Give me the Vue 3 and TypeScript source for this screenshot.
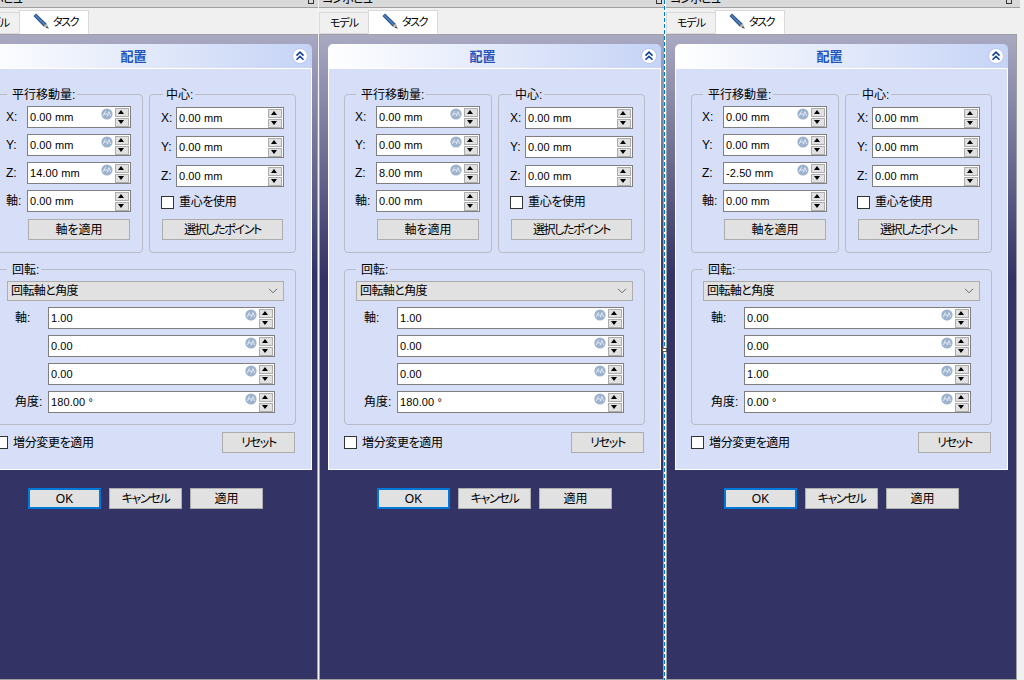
<script setup lang="ts">
interface Column {
  key: string
  z: string
  axis: string[]
  angle: string
}

const columns: Column[] = [
  { key: 'one', z: '14.00 mm', axis: ['1.00', '0.00', '0.00'], angle: '180.00 °' },
  { key: 'two', z: '8.00 mm', axis: ['1.00', '0.00', '0.00'], angle: '180.00 °' },
  { key: 'three', z: '-2.50 mm', axis: ['0.00', '0.00', '1.00'], angle: '0.00 °' },
]

const moveRows = (c: Column) => [
  { label: 'X:', value: '0.00 mm', wheel: true },
  { label: 'Y:', value: '0.00 mm', wheel: true },
  { label: 'Z:', value: c.z, wheel: true },
  { label: '軸:', value: '0.00 mm', wheel: false },
]
const centerRows = ['X:', 'Y:', 'Z:']
const rotateRows = (c: Column) => [
  { label: '軸:', value: c.axis[0] },
  { label: '', value: c.axis[1] },
  { label: '', value: c.axis[2] },
  { label: '角度:', value: c.angle },
]
</script>

<template>
  <div class="screen">
    <template v-for="(c, i) in columns" :key="c.key">
      <section class="col" :class="c.key">
        <div class="titlebar">
          <span class="titletext">コンボビュー</span>
          <i class="float"></i>
        </div>
        <div class="tabs">
          <div class="tab model">モデル</div>
          <div class="tab active">
            <svg class="pencil" width="16" height="16" viewBox="0 0 16 16">
              <path d="M3 .4 L.4 3 L10.4 13.2 L15.6 15.6 L13.4 10.4 Z" fill="#2b5288" />
              <path d="M2.4 1.4 L12.4 11 L11.2 12.2 L1.4 2.6 Z" fill="#5284bf" />
              <path d="M10.4 13.2 L15.6 15.6 L13.4 10.4 Z" fill="#bdb8a8" />
              <path d="M13.6 13.4 L15.6 15.6 L13 14.8 Z" fill="#222" />
            </svg>
            <span>タスク</span>
          </div>
        </div>
        <div class="stage">
          <div class="panel">
            <header class="phead">
              <h2>配置</h2>
              <button class="collapse" type="button" aria-label="collapse">
                <svg width="10" height="10" viewBox="0 0 10 10" fill="none" stroke="#123f9c" stroke-width="1.6">
                  <path d="M1.5 4.6 L5 1.2 L8.5 4.6" />
                  <path d="M1.5 8.8 L5 5.4 L8.5 8.8" />
                </svg>
              </button>
            </header>
            <div class="pbody">
              <div class="toprow">
                <fieldset class="group move">
                  <legend>平行移動量:</legend>
                  <div class="rows">
                    <template v-for="r in moveRows(c)" :key="r.label">
                      <label>{{ r.label }}</label>
                      <div class="spin">
                        <span class="val">{{ r.value }}</span>
                        <svg v-if="r.wheel" class="wheel" viewBox="0 0 12 12">
                          <circle cx="6" cy="6" r="5.6" fill="#9db2cd" />
                          <path d="M2.4 8 Q3.6 3 5 3.4 M3 6 H5 M5.4 5 L7 8 M8 3.6 L6 8.4 M8 3.6 L9.6 8" fill="none" stroke="#e6edf6" stroke-width=".9" />
                        </svg>
                        <span class="arrows"><b class="up"></b><b class="down"></b></span>
                      </div>
                    </template>
                    <button class="btn apply" type="button">軸を適用</button>
                  </div>
                </fieldset>
                <fieldset class="group center">
                  <legend>中心:</legend>
                  <div class="rows">
                    <template v-for="l in centerRows" :key="l">
                      <label>{{ l }}</label>
                      <div class="spin">
                        <span class="val">0.00 mm</span>
                        <span class="arrows"><b class="up"></b><b class="down"></b></span>
                      </div>
                    </template>
                  </div>
                  <div class="check"><i class="box"></i><span>重心を使用</span></div>
                  <button class="btn pick kana" type="button">選択したポイント</button>
                </fieldset>
              </div>
              <fieldset class="group rotate">
                <legend>回転:</legend>
                <div class="combo">
                  <span>回転軸と角度</span>
                  <svg width="10" height="6" viewBox="0 0 10 6" fill="none" stroke="#666" stroke-width="1">
                    <path d="M1 .8 L5 4.8 L9 .8" />
                  </svg>
                </div>
                <div class="rows">
                  <template v-for="(r, n) in rotateRows(c)" :key="n">
                    <label>{{ r.label }}</label>
                    <div class="spin">
                      <span class="val">{{ r.value }}</span>
                      <svg class="wheel" viewBox="0 0 12 12">
                        <circle cx="6" cy="6" r="5.6" fill="#9db2cd" />
                        <path d="M2.4 8 Q3.6 3 5 3.4 M3 6 H5 M5.4 5 L7 8 M8 3.6 L6 8.4 M8 3.6 L9.6 8" fill="none" stroke="#e6edf6" stroke-width=".9" />
                      </svg>
                      <span class="arrows"><b class="up"></b><b class="down"></b></span>
                    </div>
                  </template>
                </div>
              </fieldset>
              <div class="foot">
                <div class="check"><i class="box"></i><span>増分変更を適用</span></div>
                <button class="btn kana" type="button">リセット</button>
              </div>
            </div>
          </div>
          <div class="actions">
            <button class="btn ok" type="button">OK</button>
            <button class="btn kana" type="button">キャンセル</button>
            <button class="btn" type="button">適用</button>
          </div>
        </div>
      </section>
      <div v-if="i < 2" class="split" :class="{ dashed: i === 1 }"><i v-if="i === 1" class="handle"></i></div>
    </template>
  </div>
</template>

<style>
html, body { margin: 0; background: #f0f0f0; }
</style>

<style scoped>
.btn {
  box-sizing: border-box;
  width: 73px;
  height: 21px;
  padding: 0;
  background: #e1e1e1;
  border: 1px solid #adadad;
  color: #000;
  font: inherit;
  font-feature-settings: inherit;
}
.kana { letter-spacing: -1.3px; }

.screen {
  display: flex;
  width: 1024px;
  height: 680px;
  overflow: hidden;
  background: #f0f0f0;
  color: #000;
  font: 12px/14px "Liberation Sans", "Noto Sans CJK JP", sans-serif;
  font-feature-settings: "palt";
}
.col { display: flex; flex-direction: column; flex: none; height: 680px; }
.col.one { width: 348px; margin-left: -30px; }
.col.two { width: 345px; }
.col.three { width: 354px; }

.titlebar {
  display: flex;
  justify-content: space-between;
  height: 7px;
  padding: 0 4px 0 3px;
  overflow: hidden;
  flex: none;
  background: #d9d9d9;
  border-bottom: 1px solid #a0a0a0;
}
.titletext { margin-top: -8px; white-space: nowrap; height: 14px; letter-spacing: -.9px; }
.one .titletext { margin-left: -1px; }
.three .titletext { margin-left: 1px; }
.float { display: block; width: 4px; height: 4px; margin-top: -2px; border: 1px solid #333; flex: none; }
.two .float { margin-right: -2px; }
.three .float { margin-right: 4px; }

.tabs { display: flex; align-items: flex-end; height: 26px; flex: none; background: #f0f0f0; }
.tab {
  display: flex;
  align-items: center;
  justify-content: center;
  box-sizing: border-box;
  height: 22px;
  background: #f0f0f0;
  border: 1px solid #d9d9d9;
  font-size: 11px;
}
.tab.model { width: 50px; letter-spacing: -1px; }
.tab.active {
  justify-content: flex-start;
  width: 70px;
  height: 24px;
  gap: 4px;
  padding-left: 13px;
  background: #fff;
  border-bottom-color: #fff;
  margin-left: -1px;
  letter-spacing: -1.5px;
}
.pencil { flex: none; margin-top: -2px; }

.stage {
  flex: 1;
  box-sizing: border-box;
  padding: 9px 2px 0 8px;
  border: 1px solid #a0a0a0;
  background: linear-gradient(#a9a9c2 0, #333366 240px);
}
.three .stage { margin-right: 3px; }

.panel { width: 333px; }
.phead {
  display: flex;
  align-items: center;
  height: 24px;
  box-sizing: border-box;
  border-radius: 5px 5px 0 0;
  background: linear-gradient(90deg, #fff, #c5d3f6);
}
.phead h2 {
  flex: 1;
  margin: 2px 0 0;
  text-align: center;
  font-size: 13px;
  line-height: 22px;
  font-weight: 700;
  color: #2255bb;
}
.collapse {
  display: flex;
  align-items: center;
  justify-content: center;
  width: 16px;
  height: 16px;
  margin: 0 4px;
  padding: 0;
  border-radius: 50%;
  border: 1px solid #b9c6e6;
  background: #fff;
}
.pbody {
  box-sizing: border-box;
  height: 402px;
  padding: 18px 15px 0;
  background: #d6dff7;
  border: 1px solid #fff;
}
.toprow { display: grid; grid-template-columns: 148px 147px; column-gap: 6px; }
.group {
  min-width: 0;
  margin: 0;
  box-sizing: border-box;
  border: 1px solid #b9bcc6;
  border-radius: 4px;
}
legend { height: 14px; padding: 1px 2px 0 5px; box-sizing: border-box; line-height: 14px; white-space: nowrap; }

.move { padding: 5px 11px 12px 10px; }
.move legend { margin-left: 1px; }
.move .rows { display: grid; grid-template-columns: 21px 104px; row-gap: 6px; align-items: center; }
.apply { grid-column: 2; width: 102px; margin: 1px 0 0 1px; }

.center { padding: 6px 12px 0 11px; }
.center legend { margin-left: 2px; padding-left: 3px; }
.center .rows { display: grid; grid-template-columns: 15px 108px; row-gap: 7px; align-items: center; }
.center .check { margin-top: 8px; }
.pick { width: 121px; margin: 10px 0 0 1px; }

.spin {
  position: relative;
  display: flex;
  align-items: center;
  height: 22px;
  box-sizing: border-box;
  padding-left: 2px;
  background: #fff;
  border: 1px solid #7f7f7f;
  font-size: 11px;
  letter-spacing: .1px;
}
.val { flex: 1; white-space: pre; }
.wheel { position: absolute; top: 1px; right: 17px; width: 12px; height: 12px; }
.arrows { display: flex; flex-direction: column; gap: 1px; margin-right: 1px; }
.arrows b {
  position: relative;
  display: block;
  box-sizing: border-box;
  width: 14px;
  height: 9px;
  background: #e1e1e1;
  border: 1px solid #adadad;
}
.arrows b::after {
  content: "";
  position: absolute;
  left: 2px;
  top: 1px;
  border-left: 3.5px solid transparent;
  border-right: 3.5px solid transparent;
}
.arrows .up::after { border-bottom: 4px solid #000; }
.arrows .down::after { border-top: 4px solid #000; }

.check { display: flex; align-items: center; gap: 5px; white-space: nowrap; letter-spacing: -.35px; }
.box { display: block; box-sizing: border-box; width: 13px; height: 13px; background: #fff; border: 1px solid #333; }

.rotate { margin-top: 9px; padding: 5px 11px 11px 11px; }
.combo {
  display: flex;
  align-items: center;
  justify-content: space-between;
  box-sizing: border-box;
  height: 20px;
  width: 277px;
  padding: 0 5px 0 3px;
  background: #e1e1e1;
  border: 1px solid #adadad;
  letter-spacing: -.6px;
}
.rotate .rows {
  display: grid;
  grid-template-columns: 33px 227px;
  row-gap: 6px;
  align-items: center;
  margin: 6px 0 0 8px;
}
.foot { display: flex; justify-content: space-between; align-items: center; height: 21px; margin: 7px 1px 0 0; }

.actions { display: flex; justify-content: center; gap: 8px; width: 333px; margin-top: 18px; }
.ok { border: 2px solid #0078d7; }

.split { position: relative; flex: none; width: 1px; background: #f4f4f4; }
.split.dashed {
  width: 2px;
  background:
    repeating-linear-gradient(#0078d7 0 4px, #fff 4px 6px) left / 1px 100% no-repeat,
    #fff;
}
.handle {
  position: absolute;
  left: -2px;
  top: 348px;
  width: 3px;
  height: 2px;
  background: #fff;
  border: 1px solid #555;
}
</style>
